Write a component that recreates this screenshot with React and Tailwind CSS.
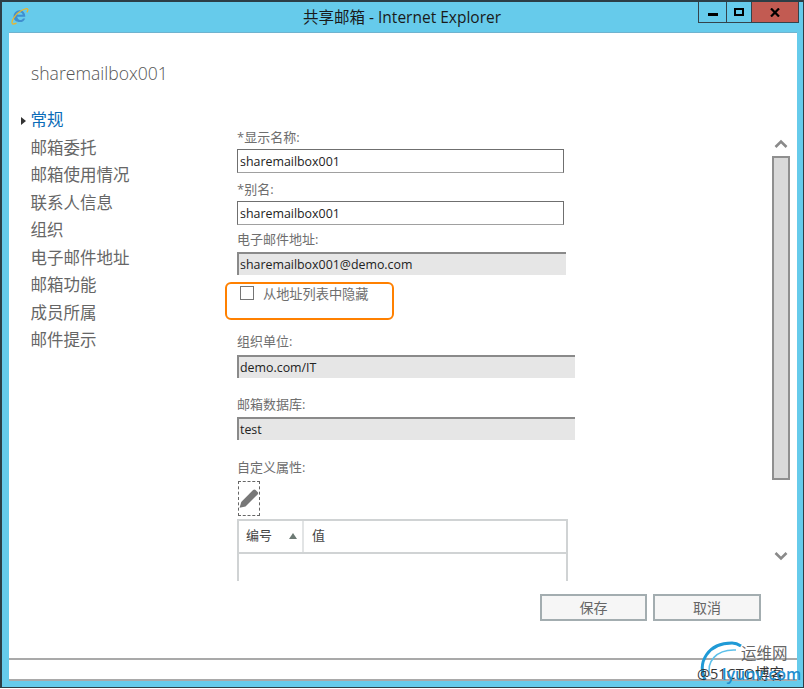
const FONT = "font-['Open_Sans','Noto_Sans_CJK_SC',sans-serif]";
const nav = ["常规", "邮箱委托", "邮箱使用情况", "联系人信息", "组织", "电子邮件地址", "邮箱功能", "成员所属", "邮件提示"];

function Label({ children, className = "" }) {
  return <div className={`text-[13px] leading-[18px] text-[#6e6e6e] ${className}`}>{children}</div>;
}
function Editable({ value }) {
  return (
    <div className="w-[327px] h-[24px] border-[1.5px] border-[#6f6f6f] border-b-[#a0a0a0] bg-white pl-[2px] text-[12.4px] leading-[23px] text-[#222] mt-[3px]">
      {value}
    </div>
  );
}
function ReadOnly({ value, w }) {
  return (
    <div className={`${w} h-[23px] bg-[#e6e6e6] border-t-2 border-l-2 border-[#8a8a8a] pl-[1px] text-[12.4px] leading-[21px] text-[#222]`}>
      {value}
    </div>
  );
}
function IEIcon() {
  return (
    <svg width="18" height="18" viewBox="0 0 18 18" className="block">
      <path d="M2.500 9.500a6.500 6 0 0 1 6-6.200c3.400 0 5.800 2.600 5.800 6.400H6.200c.2 2 1.500 3.200 3 3.200 1.200 0 2.100-.5 2.800-1.500h2.200c-.9 2.400-2.800 3.600-5.200 3.600C4.800 15 2.500 12.800 2.500 9.500zM6.200 7.800h5.500C11.500 6.200 10.400 5.200 8.900 5.200 7.500 5.200 6.500 6.200 6.200 7.800z" fill="#3f8fd0" />
      <path d="M1 16.200C.4 13 5 6.500 10.500 3.500 13.500 1.800 16.300 1 16.800 2.200c.3.800-.2 2-1 3.200" fill="none" stroke="#e8b530" strokeWidth="1.300" />
      <path d="M1 16.200c.5 1.200 2.400.9 4.500-.1" fill="none" stroke="#e8b530" strokeWidth="1.300" />
    </svg>
  );
}
function Btn({ children, w }) {
  return (
    <div className={`${w} h-[27px] border-2 border-[#a3adb0] bg-[#f6f6f6] text-center text-[14px] leading-[23px] text-[#666]`}>
      {children}
    </div>
  );
}

export default function App() {
  return (
    <div className={`${FONT} relative w-[804px] h-[689px] bg-white overflow-hidden`}>
      <div className="flex flex-col w-[804px] h-[688px] border border-[#2c3e46] border-t-2 border-l-2 bg-[#66cbeb]">
        {/* title bar */}
        <div className="flex items-start h-[30px] shrink-0">
          <div className="pl-[9px] pt-[5px]"><IEIcon /></div>
          <div className="flex-1 text-center text-[15.500px] leading-[30px] text-[#1a1a1a] pl-[95px] pr-[18px]">共享邮箱 - Internet Explorer</div>
          <div className="flex h-[21px] mr-[4px] border-[1.5px] border-t-0 border-[#34434b]">
            <div className="w-[28px] flex items-center justify-center border-r border-[#34434b]"><div className="w-[10px] h-[3px] bg-black mt-[5px]" /></div>
            <div className="w-[25px] flex items-center justify-center border-r border-[#34434b]"><div className="w-[10px] h-[8px] border-2 border-black" /></div>
            <div className="w-[46px] flex items-center justify-center bg-[#c25b52]">
              <svg width="10" height="9" viewBox="0 0 10 9"><path d="M1 .5 9 8.500M9 .5 1 8.500" stroke="#000" strokeWidth="2.200" /></svg>
            </div>
          </div>
        </div>
        {/* client area */}
        <div className="flex flex-col flex-1 ml-[7px] mr-[6px] mb-[6px] bg-white border-t border-[#6fb3cf] border-b-2 border-b-[#a9a9a9] min-h-0">
          <div className="flex-1 min-h-0 flex flex-col">
            <div className="pl-[22px] pt-[27px] text-[17.600px] leading-[26px] font-light text-[#555] shrink-0">sharemailbox001</div>
            <div className="flex pt-[21px] h-[508px] shrink-0">
              {/* nav */}
              <div className="w-[228px] shrink-0 pl-[12px]">
                {nav.map((n, i) => (
                  <div key={n} className={`flex items-center h-[27.5px] text-[16.500px] ${i === 0 ? "text-[#0a6cb8]" : "text-[#666]"}`}>
                    <span className="w-[9.500px] flex">
                      {i === 0 && <svg width="5" height="8" viewBox="0 0 5 8"><path d="M0 0 5 4 0 8z" fill="#333" /></svg>}
                    </span>
                    {n}
                  </div>
                ))}
              </div>
              {/* form */}
              <div className="w-[340px] pt-[21px] shrink-0">
                <Label>*显示名称:</Label>
                <Editable value="sharemailbox001" />
                <Label className="mt-[7px]">*别名:</Label>
                <Editable value="sharemailbox001" />
                <Label className="mt-[5px]">电子邮件地址:</Label>
                <div className="mt-[4px]"><ReadOnly value="sharemailbox001@demo.com" w="w-[329px]" /></div>
                <div className="flex items-center h-[20px] mt-[8px] pl-[3px] text-[13.200px] leading-[22px] text-[#6e6e6e]">
                  <div className="w-[14px] h-[14px] border-[1.5px] border-[#757575] mr-[9px]" />
                  <span className="pt-[2px]">从地址列表中隐藏</span>
                </div>
                <Label className="mt-[29px]">组织单位:</Label>
                <div className="mt-[5px]"><ReadOnly value="demo.com/IT" w="w-[338px]" /></div>
                <Label className="mt-[17px]">邮箱数据库:</Label>
                <div className="mt-[4px]"><ReadOnly value="test" w="w-[338px]" /></div>
                <Label className="mt-[18px]">自定义属性:</Label>
                <div className="mt-[5px] ml-[1px] w-[22px] h-[35px] border border-dashed border-[#666] flex items-center justify-center">
                  <svg className="shrink-0" width="20" height="22" viewBox="1.500 1.500 17 18"><path d="M2 18l1.400-5L13.500 2.900a1.500 1.500 0 0 1 2.100 0l1.700 1.700a1.500 1.500 0 0 1 0 2.100L7 16.800z" fill="#777" /></svg>
                </div>
                <div className="mt-[3px] w-[331px] h-[62px] border-2 border-[#d0d3d4] border-b-0">
                  <div className="flex h-[33px] border-b-2 border-[#d0d3d4] text-[13px] text-[#444]">
                    <div className="w-[65px] flex items-center justify-between pl-[7px] pr-[5px] pb-[2px] border-r-2 border-[#e2e4e5]">
                      编号
                      <svg width="8" height="6" viewBox="0 0 8 6"><path d="M0 6 4 0 8 6z" fill="#6d7a74" /></svg>
                    </div>
                    <div className="flex-1 flex items-center pl-[8px] pb-[2px]">值</div>
                  </div>
                </div>
              </div>
              {/* scrollbar */}
              <div className="flex flex-col items-center w-[18px] ml-[195px] pt-[31px] shrink-0">
                <svg className="shrink-0" width="14" height="12" viewBox="0 0 14 12"><path d="M1.500 9 7 3.500 12.500 9" fill="none" stroke="#8a8a8a" strokeWidth="2.600" /></svg>
                <div className="w-[18px] h-[324px] bg-[#d9d9d9] border-2 border-[#8f8f8f] mt-[6px] shrink-0" />
                <svg className="mt-[70px] shrink-0" width="14" height="12" viewBox="0 0 14 12"><path d="M1.500 3 7 8.500 12.500 3" fill="none" stroke="#8a8a8a" strokeWidth="2.600" /></svg>
              </div>
            </div>
            <div className="flex justify-end gap-[6px] pr-[36px] shrink-0">
              <Btn w="w-[107px]">保存</Btn>
              <Btn w="w-[108px]">取消</Btn>
            </div>
          </div>
          <div className="h-[21px] border-t-2 border-[#a9a9a9] shrink-0" />
        </div>
      </div>
      {/* annotation */}
      <div className="absolute left-[225px] top-[282px] w-[169px] h-[38px] rounded-[6px] border-[2.500px] border-[#ff8000]" />
      {/* watermark */}
      <div className="absolute left-[697px] top-[640px] w-[104px] h-[44px]">
        <svg className="absolute left-[3px] top-0" width="44" height="44" viewBox="0 0 44 44">
          <path d="M5 40C-3 22 8 3 32 3c3 0 6 1 9 3" fill="none" stroke="#1f9ad6" strokeWidth="3" />
          <path d="M10 36C6 22 16 9 36 10" fill="none" stroke="#5cc0ea" strokeWidth="1.500" />
        </svg>
        <div className="absolute left-[44px] top-[4px] text-[15.500px] leading-[18px] text-[#666]">运维网</div>
        <div className="absolute left-0 top-[26px] text-[14.500px] leading-[16px] text-[#333] whitespace-nowrap">@51CTO博客</div>
        <div className="absolute left-[25px] top-[25px] text-[16px] leading-[18px] font-semibold text-[#1f8fd0] whitespace-nowrap">lyunv.com</div>
      </div>
    </div>
  );
}
